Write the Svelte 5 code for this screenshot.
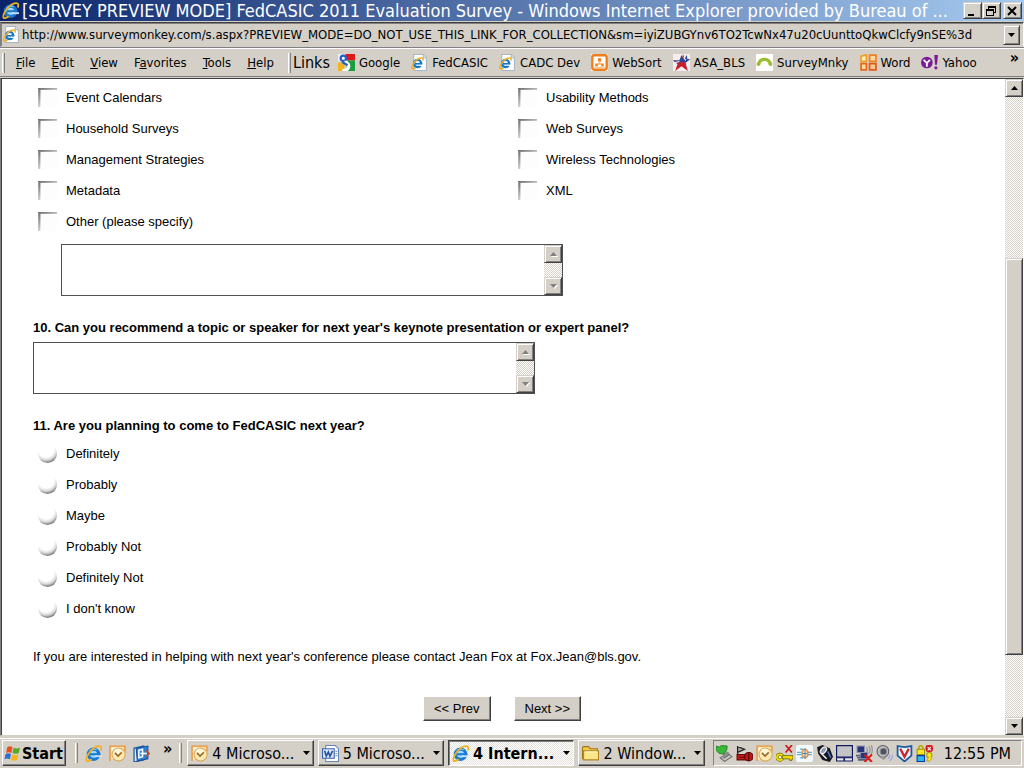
<script lang="ts">
	const menus = [
		['', 'F', 'ile'],
		['', 'E', 'dit'],
		['', 'V', 'iew'],
		['F', 'a', 'vorites'],
		['', 'T', 'ools'],
		['', 'H', 'elp']
	];

	const links = [
		{ icon: 'google', label: 'Google' },
		{ icon: 'page', label: 'FedCASIC' },
		{ icon: 'page', label: 'CADC Dev' },
		{ icon: 'websort', label: 'WebSort' },
		{ icon: 'star', label: 'ASA_BLS' },
		{ icon: 'monkey', label: 'SurveyMnky' },
		{ icon: 'office', label: 'Word' },
		{ icon: 'yahoo', label: 'Yahoo' }
	];

	const topicsLeft = ['Event Calendars', 'Household Surveys', 'Management Strategies', 'Metadata', 'Other (please specify)'];
	const topicsRight = ['Usability Methods', 'Web Surveys', 'Wireless Technologies', 'XML'];
	const answers = ['Definitely', 'Probably', 'Maybe', 'Probably Not', 'Definitely Not', "I don't know"];

	const tasks = [
		{ icon: 'outlook', count: 4, label: 'Microso...' },
		{ icon: 'word', count: 5, label: 'Microso...' },
		{ icon: 'ie', count: 4, label: 'Intern...' },
		{ icon: 'folder', count: 2, label: 'Window...' }
	];

	const tray = ['eject', 'flag', 'outlook', 'key', 'globe', 'mouse', 'screen', 'network', 'speaker', 'shield', 'locks'];

	let url = $state(
		'http://www.surveymonkey.com/s.aspx?PREVIEW_MODE=DO_NOT_USE_THIS_LINK_FOR_COLLECTION&sm=iyiZUBGYnv6TO2TcwNx47u20cUunttoQkwClcfy9nSE%3d'
	);
	let activeTask = $state(2);
	let intent = $state('');
</script>

{#snippet icon(name: string)}
	<svg class="icon" viewBox="0 0 16 16" aria-hidden="true">
		{#if name === 'ie'}
			<circle cx="8" cy="8.700" r="4.900" fill="#9fdcff" stroke="#1a7ad4" stroke-width="3" />
			<path d="M4 8.700h10.500" stroke="#1a7ad4" stroke-width="2" />
			<path d="M9.500 9.700H16v1.700H9.500z" fill="#cfe4f4" />
			<path d="M4.500 5.500C6 3.700 9 3.300 11 4.500" fill="none" stroke="#6cc4fa" stroke-width="1.200" />
			<path d="M1.800 15.200C-.5 12.500 6.500 1.500 13 1c3-.2 2.700 2.400 1.700 4.200M1.500 15c1.500.8 3.300-.4 4.800-1.500" fill="none" stroke="#f0b020" stroke-width="1.700" />
		{:else if name === 'page'}
			<path d="M2.500.5h9l3 3v12h-12z" fill="#fff" stroke="#a8b4c4" />
			<path d="M11.500.5v3h3" fill="#dfe6ee" stroke="#a8b4c4" />
			<circle cx="6.200" cy="9" r="3.400" fill="#fff" stroke="#1878c8" stroke-width="2.200" />
			<path d="M3.500 9.200h7" stroke="#1878c8" stroke-width="1.600" />
			<path d="M7.500 10h3.500v1.200H7.500z" fill="#fff" />
			<path d="M1 14C-.3 11.500 4.500 4.500 9.500 3.800c2.300-.2 2.200 1.300 1.600 2.400M1 14c1 .6 2.400-.3 3.300-1" fill="none" stroke="#eeb22a" stroke-width="1.400" />
		{:else if name === 'google'}
			<path d="M0 0h7v7H0z" fill="#e9f1fb" />
			<path d="M7 0h9v6H8z" fill="#e01818" />
			<path d="M9 6h7v10H8z" fill="#1a9c40" />
			<path d="M0 8h6v8H0z" fill="#f3b51c" />
			<circle cx="5" cy="4" r="2.500" fill="#fff" stroke="#2460c8" stroke-width="2" />
			<path d="M6 7.500C9 8 10.500 10 10 12.500S6 16 4 15.500" fill="none" stroke="#fff" stroke-width="3" />
			<path d="M4 7.500l5 3" stroke="#2460c8" stroke-width="2.200" />
		{:else if name === 'websort'}
			<path d="M0 0h16v16H0z" fill="#fff" />
			<rect x="1.200" y="1.200" width="13.600" height="13.600" rx="2" fill="#fff" stroke="#ef7d1a" stroke-width="2.200" />
			<path d="M6.500 4h3v3h-3zM4 9h2.500v2.500H4zM9.500 9H12v2.500H9.500z" fill="#ef7d1a" />
			<path d="M8 7l-2.500 3h5z" fill="#f6b67c" />
			<path d="M3 12.500h10" stroke="#f6b67c" />
		{:else if name === 'star'}
			<path d="M0 0h16v16H0z" fill="#f4efef" />
			<path d="M8 5.500L9.500 0l1.500 5h5l-4.200 3.300L14 16l-6-4.500L2 16l2.300-6.700L0 6h6z" fill="#c6202c" />
			<path d="M0 6h6L8 1l2 5 3-5 .5 4H16l-4 3-4-1-4 2z" fill="#24489c" />
			<path d="M2 8l4-1M10 3l2 3" stroke="#fff" />
		{:else if name === 'monkey'}
			<path d="M0 0h16v16H0z" fill="#fff" />
			<path d="M2.500 10C3 6.500 5 5 8 5s5 1.500 5.500 5" fill="none" stroke="#9bbc2e" stroke-width="3" />
			<circle cx="2.300" cy="9.500" r="1.800" fill="#9bbc2e" />
			<circle cx="13.700" cy="9.500" r="1.800" fill="#9bbc2e" />
		{:else if name === 'office'}
			<path d="M1 2l5-1v6H1z" fill="#fff0c8" stroke="#f0a020" stroke-width="1.600" />
			<path d="M9 1h6v6H9z" fill="#ffd8a0" stroke="#f08020" stroke-width="1.600" />
			<path d="M1 9h5v6H1z" fill="#ffd8a0" stroke="#e86818" stroke-width="1.600" />
			<path d="M9 9h6v6H9z" fill="#ffc890" stroke="#e05818" stroke-width="1.600" />
		{:else if name === 'yahoo'}
			<circle cx="5.500" cy="8" r="5.500" fill="#7b1c96" />
			<path d="M2.500 5.500l3 3 3-3M5.500 8.500V12" fill="none" stroke="#fff" stroke-width="1.700" />
			<path d="M12.500 1H16l-1 9h-1.800z" fill="#7b1c96" />
			<circle cx="14" cy="13" r="1.500" fill="#7b1c96" />
		{:else if name === 'outlook'}
			<path d="M1 15V1h8l6 0v5" fill="#fbe3a8" stroke="#e69138" stroke-width="1.200" />
			<path d="M3 13V3h9" fill="none" stroke="#fff" />
			<circle cx="9" cy="9" r="6.200" fill="#fde9b2" stroke="#dba557" />
			<circle cx="8" cy="7" r="3.500" fill="#fff7dc" />
			<path d="M5.500 7.500L8.500 10.500 12 7" fill="none" stroke="#9a6a20" stroke-width="1.600" />
		{:else if name === 'notes'}
			<path d="M1 3l9-2v13l-9 2z" fill="#e4f0fb" stroke="#1e5ca8" stroke-width="1.200" />
			<path d="M3 3l11-2v12L4 15z" fill="#2a7fd4" stroke="#1b4e94" />
			<path d="M9 4L5.500 5v7L9 11z" fill="#2a7fd4" stroke="#fff" stroke-width="1.400" />
			<path d="M7 8h6" stroke="#fff" stroke-width="1.600" />
			<path d="M12.500 5.500L15.500 8l-3 2.500" fill="none" stroke="#d84818" stroke-width="1.300" />
		{:else if name === 'word'}
			<path d="M3.500.5h9l3 3v12h-12z" fill="#fff" stroke="#6686b8" />
			<path d="M.5 3.500h11v9H.5z" fill="#dbe7f7" stroke="#3661a8" />
			<path d="M2.500 5.500l1.500 5 2-4 1.500 4 2.500-5" fill="none" stroke="#274f9c" stroke-width="1.500" />
			<path d="M12.500 6h2M12.500 8h2M12.500 10h2" stroke="#86a0c8" />
		{:else if name === 'folder'}
			<path d="M.5 13V2.500l1-1H6l2 2h6.500V13z" fill="#f2c94e" stroke="#a17414" />
			<path d="M1.500 14V5.500h14V14z" fill="#fde68a" stroke="#b3841c" />
			<path d="M2.500 6.500h12" stroke="#fff8cc" />
		{:else if name === 'flagwin'}
			<path d="M3 2c2-1 3-1 5 0L7 7.500c-2-1-3-1-5 0z" fill="#e8501c" />
			<path d="M9 2.500c2 1 3 1 6 0l-1 5c-2 1-4 1-6 0z" fill="#58a828" />
			<path d="M1.500 8.500c2-1 3-1 5 0l-1 5c-2-1-3-1-5 0z" fill="#2c6cd8" />
			<path d="M7.500 9c2 1 4 1 6 0l-1 5c-2 1-4 1-6 0z" fill="#f4b81c" />
		{:else if name === 'eject'}
			<path d="M4 12l7-4 4 3-7 4.500z" fill="#c8c8c0" stroke="#707070" />
			<path d="M6 8.500L11 6l2 2-5 3z" fill="#888" />
			<path d="M0 1l3 1 2-1.500L10.500 1l-.5 4-3 3.500L3 8 0 5z" fill="#38b838" stroke="#187818" stroke-width=".8" />
			<path d="M7 12.500l5-3" stroke="#585858" />
		{:else if name === 'flag'}
			<path d="M1.500 1v8M1.500 1.500L8 4 1.500 7" fill="#aaa" stroke="#222" stroke-width="1.200" />
			<path d="M1 9h9v5H1z" fill="#c81818" stroke="#600808" />
			<circle cx="12" cy="11" r="4" fill="#c01414" stroke="#500606" />
			<path d="M12 7v8M3 11.500h5" stroke="#500606" />
		{:else if name === 'key'}
			<circle cx="3.700" cy="11.500" r="2.700" fill="#fff" stroke="#706800" stroke-width="3" />
			<circle cx="3.700" cy="11.500" r="2.700" fill="none" stroke="#f4e000" stroke-width="1.800" />
			<path d="M6 10h10v3h-1v1.500h-2V13H6z" fill="#f4e000" stroke="#706800" stroke-width=".8" />
			<path d="M9 0l6 7M15 0L9 7" stroke="#d01818" stroke-width="1.600" />
		{:else if name === 'globe'}
			<rect width="16" height="16" rx="2" fill="#f2f9fd" />
			<path d="M1 7h4M1 9h4M11 7h4M11 9h4M4 4h3M4 12h3" stroke="#5cb0dc" stroke-width="1.200" />
			<ellipse cx="8.500" cy="8" rx="2.800" ry="4" fill="#fbe0bc" stroke="#e8924c" stroke-width="1.600" />
			<path d="M8.500 3v10M6 8h5" stroke="#3c90c4" />
		{:else if name === 'mouse'}
			<path d="M1 2l5-2 7 3 3 8-3 5-7-2-4-6z" fill="#181820" />
			<ellipse cx="7" cy="5" rx="2.200" ry="3.600" transform="rotate(40 7 5)" fill="#8c98b0" stroke="#f4f4f4" stroke-width="1.200" />
			<path d="M5 8l5 5" stroke="#f4f4f4" stroke-width="1.400" />
			<path d="M11 6l3 6" stroke="#4878c8" stroke-width="1.500" />
		{:else if name === 'screen'}
			<path d="M.5.500h15v11H.5z" fill="#c4c4c4" stroke="#101860" stroke-width="1.200" />
			<path d="M.5 12h7v3h-7zM8 12h7.500v3H8z" fill="#e8e8e8" stroke="#101860" />
		{:else if name === 'network'}
			<path d="M1 1h7v6H1z" fill="#26357c" stroke="#8c94ac" />
			<path d="M4 7h7v6H4z" fill="#26357c" stroke="#8c94ac" />
			<path d="M0 10h4M1 12h3M2 14h7" stroke="#555c78" stroke-width="1.500" />
			<path d="M10 2c1 2 1 3 0 5M12 1c2 3 1.500 5 0 7M14.500 0c1.500 4 1 6 0 9" fill="none" stroke="#8c8c98" />
			<path d="M8 9l7 7M15 9l-7 7" stroke="#d81c1c" stroke-width="2" />
		{:else if name === 'speaker'}
			<circle cx="6.500" cy="6" r="5.500" fill="#c0c0c4" stroke="#606068" />
			<circle cx="7" cy="6" r="3" fill="#50505c" stroke="#888890" />
			<path d="M3 11l4 3 3-2" fill="#999" />
			<path d="M11 13c2-1 2-2 2-4M13 15c2-2 3-3 2.500-6" fill="none" stroke="#9ca8e0" stroke-width="1.300" />
		{:else if name === 'shield'}
			<path d="M1.500 1L8 2l6.500-1v9L8 15.500 1.500 10z" fill="#e8f4fc" stroke="#1c5c9c" stroke-width="1.700" />
			<path d="M4 3.500L8 11l4-7.500" fill="none" stroke="#d02028" stroke-width="2.200" />
		{:else if name === 'locks'}
			<path d="M2.500 5V3c0-3 4-3 4 0v2M2.500 12v-2c0-3 4-3 4 0v2" fill="none" stroke="#b8a800" stroke-width="1.400" />
			<path d="M1 4h7v5H1z" fill="#ffe81c" stroke="#887c00" stroke-width=".8" />
			<path d="M1 10h7v5.500H1z" fill="#2cb8f0" stroke="#0838a8" />
			<rect x="9" y="0" width="7" height="6.500" rx="2" fill="#d41c20" />
			<path d="M11 2l3 3M14 2l-3 3" stroke="#fff" />
			<circle cx="12.500" cy="9.500" r="2.500" fill="#ffe81c" stroke="#a89800" />
			<path d="M12 11l-2 4h3l2-3" fill="#ffe81c" stroke="#a89800" stroke-width=".7" />
		{/if}
	</svg>
{/snippet}

{#snippet arrow(dir: string)}
	<svg class="arrow" viewBox="0 0 7 4" aria-hidden="true">
		{#if dir === 'up'}
			<path d="M0 4L3.500 0 7 4z" fill="currentColor" />
		{:else}
			<path d="M0 0h7L3.500 4z" fill="currentColor" />
		{/if}
	</svg>
{/snippet}

{#snippet comment(id: string, label: string)}
	<div class="comment">
		<textarea {id} aria-label={label}></textarea>
		<div class="scrollbar idle">
			<button type="button" class="scroll-btn" aria-label="Scroll up" disabled>{@render arrow('up')}</button>
			<div class="track"></div>
			<button type="button" class="scroll-btn" aria-label="Scroll down" disabled>{@render arrow('down')}</button>
		</div>
	</div>
{/snippet}

{#snippet topics(items: string[])}
	<div>
		{#each items as topic}
			<label class="option"><input type="checkbox" name="topics" value={topic} />{topic}</label>
		{/each}
	</div>
{/snippet}

<div class="desktop">
	<header class="title-bar">
		{@render icon('ie')}
		<h1>[SURVEY PREVIEW MODE] FedCASIC 2011 Evaluation Survey - Windows Internet Explorer provided by Bureau of ...</h1>
		<div class="window-buttons">
			<button type="button" aria-label="Minimize">
				<svg viewBox="0 0 12 10"><path d="M2 8h6v2H2z" /></svg>
			</button>
			<button type="button" aria-label="Restore">
				<svg viewBox="0 0 12 10"><path d="M3 0h8v7H9V6h1V2H4v1H3zM1 3h8v7H1zM2 5v4h6V5z" fill-rule="evenodd" /></svg>
			</button>
			<button type="button" class="close" aria-label="Close">
				<svg viewBox="0 0 12 10"><path d="M2 1l8 8M10 1L2 9" fill="none" stroke="#000" stroke-width="2" /></svg>
			</button>
		</div>
	</header>

	<div class="address-bar">
		{@render icon('page')}
		<input type="text" aria-label="Address" bind:value={url} />
		<button type="button" class="drop" aria-label="Address history">{@render arrow('down')}</button>
	</div>

	<div class="toolbar">
		<span class="grip"></span>
		<nav class="menus" aria-label="Menu">
			{#each menus as [before, key, after]}
				<button type="button">{before}<u>{key}</u>{after}</button>
			{/each}
		</nav>
		<span class="grip"></span>
		<span class="links-label">Links</span>
		<nav class="links" aria-label="Links">
			{#each links as link}
				<a href="#{link.label}">{@render icon(link.icon)}{link.label}</a>
			{/each}
		</nav>
		<button type="button" class="more" aria-label="More links">»</button>
	</div>

	<div class="viewport">
		<main>
			<div class="topics">
				{@render topics(topicsLeft)}
				{@render topics(topicsRight)}
			</div>
			<div class="other">
				{@render comment('other', 'Other (please specify)')}
			</div>

			<h2><label for="q10">10. Can you recommend a topic or speaker for next year's keynote presentation or expert panel?</label></h2>
			{@render comment('q10', 'Keynote or expert panel suggestion')}

			<h2 id="q11">11. Are you planning to come to FedCASIC next year?</h2>
			<div class="answers" role="radiogroup" aria-labelledby="q11">
				{#each answers as answer}
					<label class="option"><input type="radio" name="intent" value={answer} bind:group={intent} />{answer}</label>
				{/each}
			</div>

			<p>If you are interested in helping with next year's conference please contact Jean Fox at Fox.Jean@bls.gov.</p>

			<div class="pager">
				<button type="button">&lt;&lt; Prev</button>
				<button type="button">Next &gt;&gt;</button>
			</div>
		</main>
		<div class="scrollbar">
			<button type="button" class="scroll-btn" aria-label="Scroll up">{@render arrow('up')}</button>
			<div class="track page-track"><div class="thumb"></div></div>
			<button type="button" class="scroll-btn" aria-label="Scroll down">{@render arrow('down')}</button>
		</div>
	</div>

	<footer class="taskbar">
		<button type="button" class="start">{@render icon('flagwin')}Start</button>
		<span class="grip"></span>
		<div class="quick">
			<button type="button" aria-label="Internet Explorer">{@render icon('ie')}</button>
			<button type="button" aria-label="Outlook">{@render icon('outlook')}</button>
			<button type="button" aria-label="Show desktop">{@render icon('notes')}</button>
			<button type="button" class="more" aria-label="More">»</button>
		</div>
		<span class="grip"></span>
		<div class="tasks">
			{#each tasks as task, i}
				<button type="button" class="task" class:active={activeTask === i} onclick={() => (activeTask = i)}>
					{@render icon(task.icon)}
					<span class="task-label">{task.count} {task.label}</span>
					{@render arrow('down')}
				</button>
			{/each}
		</div>
		<div class="tray">
			{#each tray as name}
				{@render icon(name)}
			{/each}
			<time>12:55 PM</time>
		</div>
	</footer>
</div>

<style>
	:global(body) {
		margin: 0;
		background: #d4d0c8;
	}

	.desktop {
		display: flex;
		flex-direction: column;
		min-height: 100vh;
		background: #d4d0c8;
		color: #000;
		font-family: 'DejaVu Sans Condensed', 'DejaVu Sans', sans-serif;
		font-size: 13px;
	}

	button,
	input,
	textarea {
		box-sizing: border-box;
		margin: 0;
		padding: 0;
		border: 0;
		border-radius: 0;
		background: none;
		color: inherit;
		font: inherit;
	}

	.icon {
		flex: none;
		display: block;
		width: 17px;
		height: 17px;
	}

	.arrow {
		flex: none;
		display: block;
		width: 7px;
		height: 4px;
	}

	.title-bar {
		display: flex;
		align-items: center;
		gap: 3px;
		height: 21px;
		padding: 0 2px;
		background: linear-gradient(to right, #0a246a, #a6caf0);
		color: #fff;
	}

	h1 {
		flex: 1;
		min-width: 0;
		margin: 0;
		overflow: hidden;
		font-size: 18px;
		font-weight: normal;
		line-height: 21px;
		white-space: nowrap;
	}

	.window-buttons {
		display: flex;
	}

	.window-buttons button,
	.drop,
	.scroll-btn,
	.thumb {
		box-sizing: border-box;
		border: 1px solid;
		border-color: #d4d0c8 #404040 #404040 #d4d0c8;
		background: #d4d0c8;
		box-shadow: inset 1px 1px #fff, inset -1px -1px #808080;
	}

	.window-buttons button {
		width: 19px;
		height: 17px;
		padding: 3px 2px;
	}

	.window-buttons .close {
		margin-left: 2px;
	}

	.window-buttons svg {
		display: block;
		width: 12px;
		height: 10px;
	}

	.address-bar {
		display: flex;
		align-items: center;
		gap: 2px;
		height: 25px;
		margin-top: 1px;
		padding: 0 3px 0 2px;
		box-sizing: border-box;
		border: 1px solid;
		border-color: #404040 #fff #d4d0c8 #808080;
		box-shadow: inset 1px 1px #808080;
	}

	.address-bar input {
		flex: 1;
		min-width: 0;
		height: 20px;
	}

	.drop {
		display: flex;
		align-items: center;
		justify-content: center;
		width: 17px;
		height: 20px;
	}

	.toolbar {
		display: flex;
		align-items: center;
		height: 30px;
		padding: 1px 5px 0 2px;
		box-sizing: border-box;
		border-top: 1px solid #808080;
		border-bottom: 1px solid #808080;
		box-shadow: inset 0 1px #fff;
	}

	.grip {
		flex: none;
		width: 1px;
		height: 20px;
		border-left: 1px solid #fff;
		border-right: 1px solid #808080;
	}

	.menus {
		display: flex;
		gap: 16px;
		padding: 0 14px 0 11px;
	}

	.links-label {
		margin: 0 8px 0 2px;
		font-size: 16px;
	}

	.links {
		display: flex;
		flex: 1;
		gap: 11px;
		min-width: 0;
		overflow: hidden;
	}

	.links a {
		display: flex;
		align-items: center;
		gap: 4px;
		color: inherit;
		text-decoration: none;
		white-space: nowrap;
	}

	.more {
		align-self: flex-start;
		padding-top: 1px;
		font-size: 16px;
		font-weight: bold;
		line-height: 16px;
	}

	.viewport {
		display: flex;
		flex: 1;
		margin-top: 1px;
		border: 1px solid #808080;
		border-top-color: #404040;
		border-right-color: #fff;
		border-bottom-color: #d4d0c8;
		background: #fff;
		box-shadow: inset 1px 0 #404040;
	}

	main {
		flex: 1;
		min-width: 0;
		padding: 3px 12px 14px 32px;
		font-family: 'Liberation Sans', Arial, sans-serif;
		font-size: 13px;
		line-height: 16px;
	}

	.topics {
		display: grid;
		grid-template-columns: 1fr 1fr;
	}

	.option {
		display: flex;
		align-items: center;
		gap: 9px;
		height: 31px;
		padding-left: 5px;
	}

	.option input {
		appearance: none;
		flex: none;
		width: 19px;
		height: 19px;
	}

	input[type='checkbox'] {
		background:
			linear-gradient(to right, #6c6c6c, #b8b8b8) 0 0 / 100% 1px no-repeat,
			linear-gradient(to bottom, #8c8c8c, #d0d0d0) 0 0 / 1px 100% no-repeat,
			linear-gradient(to right, #808080, #c8c8c8) 0 1px / 100% 1px no-repeat,
			linear-gradient(to bottom, #6c6c6c, #d0d0d0) 1px 0 / 1px 100% no-repeat,
			linear-gradient(to bottom, #b8b8b8, #f0f0f0) 2px 0 / 1px 100% no-repeat,
			#fdfdfd;
	}

	input[type='radio'] {
		border-radius: 50%;
		background: radial-gradient(circle at 8px 5px, #fff 8px, #d8d8d8 11px, #747474 14px);
	}

	input[type='checkbox']:checked,
	input[type='radio']:checked {
		box-shadow: inset 0 0 0 6px #fff;
		background: #404040;
	}

	.other {
		padding: 7px 0 0 28px;
	}

	.comment {
		display: flex;
		box-sizing: border-box;
		max-width: 502px;
		height: 52px;
		border: 1px solid #505050;
	}

	textarea {
		flex: 1;
		min-width: 0;
		padding: 2px;
		resize: none;
		overflow: hidden;
	}

	.scrollbar {
		display: flex;
		flex: none;
		flex-direction: column;
		width: 18px;
	}

	.scroll-btn {
		display: flex;
		align-items: center;
		justify-content: center;
		height: 18px;
	}

	.idle .arrow {
		color: #808080;
		filter: drop-shadow(1px 1px #fff);
	}

	.track {
		flex: 1;
		background: repeating-conic-gradient(#fff 0 25%, #d4d0c8 0 50%) 0 0 / 2px 2px;
	}

	.page-track {
		display: flex;
		flex-direction: column;
	}

	/* thumb covers the part of the page that is in view */
	.thumb {
		flex: 0 0 64%;
		margin: auto 0 62px;
	}

	h2 {
		margin: 24px 0 0;
		font-size: 13px;
		line-height: 16px;
	}

	h2 + .comment {
		margin-top: 6px;
	}

	.answers {
		margin-top: 4px;
	}

	p {
		margin: 25px 0 31px;
	}

	.pager {
		display: flex;
		justify-content: center;
		gap: 23px;
		padding-right: 22px;
	}

	.pager button {
		height: 25px;
		padding: 0 10px;
		border: 1px solid;
		border-color: #fff #404040 #404040 #fff;
		background: #d4d0c8;
		box-shadow: inset -1px -1px #808080;
	}

	.taskbar {
		display: flex;
		align-items: center;
		height: 31px;
		margin-top: 2px;
		padding: 0 2px 2px;
		box-sizing: border-box;
		border-top: 1px solid #fff;
		font-size: 16px;
	}

	.start,
	.task {
		display: flex;
		align-items: center;
		height: 26px;
		border: 1px solid;
		border-color: #fff #404040 #404040 #fff;
		box-shadow: inset -1px -1px #808080;
	}

	.start {
		gap: 1px;
		margin-right: 9px;
		padding: 0 2px 0 1px;
		font-weight: bold;
	}

	.quick {
		display: flex;
		gap: 7px;
		padding: 0 7px;
	}

	.quick .more {
		margin-left: 6px;
		padding: 0 0 8px;
	}

	.tasks {
		display: flex;
		flex: 1;
		gap: 4px;
		min-width: 0;
		padding: 0 8px 0 5px;
	}

	.quick button {
		align-self: center;
	}

	.task {
		flex: 1 1 0;
		gap: 4px;
		min-width: 0;
		padding: 0 3px;
	}

	.task-label {
		flex: 1;
		min-width: 0;
		overflow: hidden;
		text-align: left;
		white-space: nowrap;
	}

	.task.active {
		border-color: #404040 #fff #fff #404040;
		background: repeating-conic-gradient(#fff 0 25%, #e4e1dc 0 50%) 0 0 / 2px 2px;
		box-shadow: inset 1px 1px #808080;
		font-weight: bold;
	}

	.tray {
		display: flex;
		align-items: center;
		gap: 3px;
		height: 26px;
		padding: 0 10px 0 2px;
		box-sizing: border-box;
		border: 1px solid;
		border-color: #808080 #fff #fff #808080;
	}

	time {
		margin-left: 8px;
	}
</style>
